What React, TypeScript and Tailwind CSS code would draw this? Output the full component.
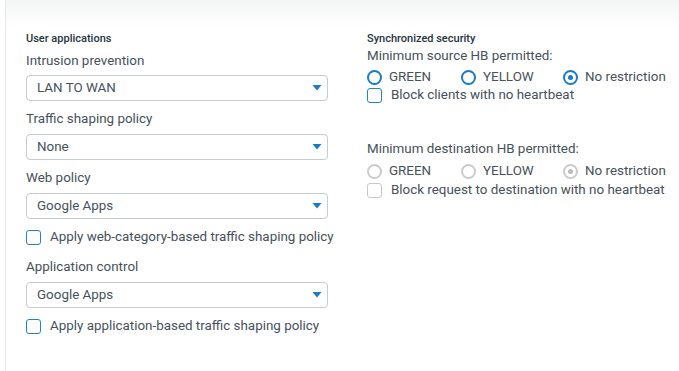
import React from "react";

const Arrow = () => (
  <svg width="10" height="6" viewBox="0 0 10 6" className="shrink-0">
    <path d="M0.5 0 L9.5 0 L5 5.5 Z" fill="#1a7cc7" />
  </svg>
);

function Select({ value }: { value: string }) {
  return (
    <div className="h-[26px] w-[302px] border border-[#c5cbd1] rounded-[4px] flex items-center justify-between pl-[10px] pr-[5px] text-[13.4px] text-[#46515c] bg-white">
      <span>{value}</span>
      <Arrow />
    </div>
  );
}

function Check({ label, disabled }: { label: string; disabled?: boolean }) {
  return (
    <div className="flex items-center h-[18px]">
      <div
        className={
          "w-[15px] h-[15px] rounded-[3px] border-[1.5px] bg-white shrink-0 " +
          (disabled ? "border-[#c9c9c9]" : "border-[#2184c9]")
        }
      />
      <span className="ml-[9px] text-[13.4px] text-[#46515c] whitespace-nowrap">{label}</span>
    </div>
  );
}

function Radio({ label, checked, disabled, w }: { label: string; checked?: boolean; disabled?: boolean; w: string }) {
  return (
    <div className={"flex items-center " + w}>
      <div
        className={
          "w-[15px] h-[15px] rounded-full border-2 flex items-center justify-center shrink-0 " +
          (disabled ? "border-[#cbcbcb]" : "border-[#1a7cc7]")
        }
      >
        {checked && (
          <div className={"w-[5px] h-[5px] rounded-full " + (disabled ? "bg-[#bdbdbd]" : "bg-[#1a7cc7]")} />
        )}
      </div>
      <span className="ml-[7px] text-[13.4px] text-[#46515c] whitespace-nowrap">{label}</span>
    </div>
  );
}

const Label = ({ children }: { children: React.ReactNode }) => (
  <div className="text-[13.4px] leading-[18px] text-[#46515c]">{children}</div>
);

export default function App() {
  return (
    <div className="w-[679px] h-[371px] bg-white overflow-hidden" style={{ fontFamily: "Roboto, 'Liberation Sans', sans-serif" }}>
      <div className="ml-[5px] h-full border-l border-[#e6e8ea] bg-gradient-to-b from-[#f4f5f5] to-white to-[28px] flex pt-[32px]">
        <div className="pl-[20px] w-[341px] flex flex-col">
          <div className="text-[11px] leading-[14px] font-medium text-[#263340]">User applications</div>
          <div className="mt-[6px]"><Label>Intrusion prevention</Label></div>
          <div className="mt-[5px]"><Select value="LAN TO WAN" /></div>
          <div className="mt-[9px]"><Label>Traffic shaping policy</Label></div>
          <div className="mt-[6px]"><Select value="None" /></div>
          <div className="mt-[9px]"><Label>Web policy</Label></div>
          <div className="mt-[6px]"><Select value="Google Apps" /></div>
          <div className="mt-[9px]"><Check label="Apply web-category-based traffic shaping policy" /></div>
          <div className="mt-[12px]"><Label>Application control</Label></div>
          <div className="mt-[6px]"><Select value="Google Apps" /></div>
          <div className="mt-[9px]"><Check label="Apply application-based traffic shaping policy" /></div>
        </div>
        <div className="pl-[20px] flex flex-col">
          <div className="text-[11px] leading-[14px] font-medium text-[#263340]">Synchronized security</div>
          <div className="mt-[1px]"><Label>Minimum source HB permitted:</Label></div>
          <div className="mt-[3px] flex items-center h-[18px]">
            <Radio label="GREEN" w="w-[94px]" />
            <Radio label="YELLOW" w="w-[102px]" />
            <Radio label="No restriction" checked w="" />
          </div>
          <div className="mt-[0px]"><Check label="Block clients with no heartbeat" /></div>
          <div className="mt-[36px]"><Label>Minimum destination HB permitted:</Label></div>
          <div className="mt-[4px] flex items-center h-[18px]">
            <Radio label="GREEN" disabled w="w-[94px]" />
            <Radio label="YELLOW" disabled w="w-[102px]" />
            <Radio label="No restriction" checked disabled w="" />
          </div>
          <div className="mt-[1px]"><Check label="Block request to destination with no heartbeat" disabled /></div>
        </div>
      </div>
    </div>
  );
}
